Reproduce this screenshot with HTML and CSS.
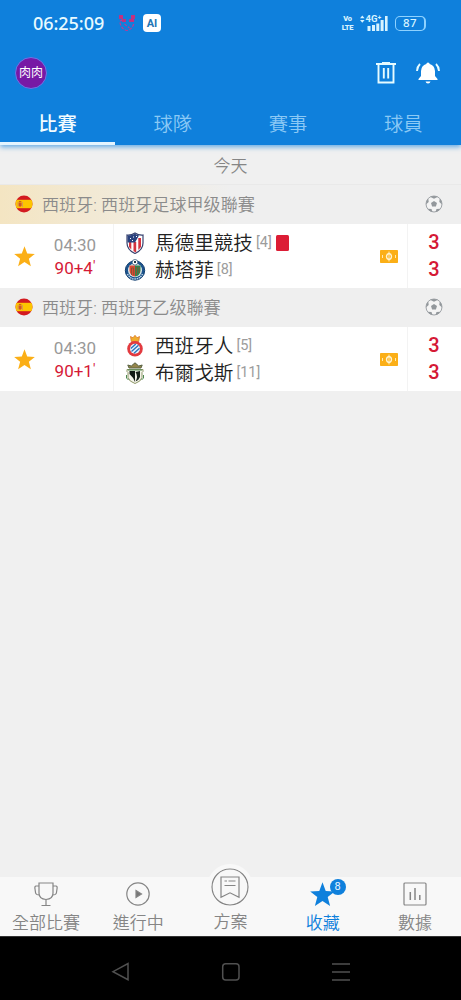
FILE: index.html
```html
<!DOCTYPE html>
<html lang="zh-Hant">
<head>
<meta charset="utf-8">
<meta name="viewport" content="width=device-width, initial-scale=1">
<title>收藏</title>
<link rel="stylesheet" href="styles.css">
</head>
<body>
<svg class="defs" width="0" height="0" aria-hidden="true">
  <symbol id="flag" viewBox="0 0 18 18">
    <clipPath id="round"><circle cx="9" cy="9" r="8.5"/></clipPath>
    <g clip-path="url(#round)"><rect width="18" height="18" fill="#d31a20"/><rect y="4.800" width="18" height="8.400" fill="#fdc400"/><path d="M2.500 7h1v5h-1zM7 7h1v5H7z" fill="#d99a50"/><path d="M3.700 7.500h2.900v3.200q-1.500 2-2.900 0z" fill="#d0522c"/><path d="M3.900 6.500h2.500" stroke="#c8601c"/></g>
  </symbol>
  <symbol id="ball" viewBox="0 0 18 18">
    <circle cx="9" cy="9" r="8" fill="#f4f4f4" stroke="#a0a4a8" stroke-width="1"/>
    <path d="M9 5.900l3 2.200-1.100 3.500H7.100L6 8.100zM5 1.700l4 2 4-2Q9 .2 5 1.700zM1 9.500l2.700-2.600-.4-3.300Q.8 6 1 9.500zM17 9.500l-2.700-2.600.4-3.300Q17.200 6 17 9.500zM2.500 13.700l4 .4 1 2.900Q4.500 16.500 2.500 13.700zM15.500 13.700l-4 .4-1 2.900q3-.5 5-3.300z" fill="#93989c"/>
  </symbol>
  <symbol id="star" viewBox="0 0 24 24"><path d="M12 .3l3.100 8.300 8.700.4-6.800 5.500 2.300 8.500L12 18.200l-7.300 4.800L7 14.500.2 9l8.700-.4z" fill="currentColor"/></symbol>
  <symbol id="pitch" viewBox="0 0 18 13">
    <rect width="18" height="13" rx=".8" fill="#fbaf17"/><path d="M9 1.500v10M2.500 5v3M15.500 5v3" stroke="#ffe9b0" stroke-width="1"/><path d="M9 3.500q2.500.5 2.500 3T9 9.500Q6.500 9 6.500 6.500T9 3.500z" fill="none" stroke="#fff3d0" stroke-width="1.300"/>
  </symbol>
</svg>

<div class="phone">
  <header class="top">
    <div class="status">
      <span class="clock">06:25:09</span>
      <svg class="pig" width="18" height="18" viewBox="0 0 18 18"><g fill="none" stroke="#ba3c95" stroke-width="1.200"><path d="M2 2l4 1.500M16 2l-4 1.500M2 7l4-2M16 7l-4-2M2 8.500Q3 15 9 16.500 15 15 16 8.500M6.500 10l5 4" stroke-dasharray="3 1.500"/></g><path d="M1 1h4v4H1zM13 1h4v4h-4zM4 5h4v3H4zM11 5h5v3h-5z" fill="#d82873" opacity=".85"/></svg>
      <span class="ai">AI</span>
      <span class="volte"><b>Vo</b><b>LTE</b></span>
      <svg class="signal" width="30" height="18" viewBox="0 0 30 18"><path d="M1 4.200L3.300 1.500l2.300 2.700zM1 6l2.300 2.700L5.600 6z" fill="#d7f3ff"/><text x="6.500" y="8.300" class="net">4G⁺</text><path d="M8.500 12h3v5h-3zM13 11h3v6h-3zM17.300 9.500h3V17h-3zM21.600 6h3v11h-3zM26 2h2.600v15H26z" fill="#d7f3ff"/></svg>
      <span class="battery">87</span>
    </div>
    <div class="appbar">
      <span class="avatar">肉肉</span>
      <svg class="trash" width="22" height="24" viewBox="0 0 22 24" fill="none" stroke="#e6fbff" stroke-width="1.900"><path d="M1 3h20M7 2h8M3.500 3v18.500h15V3M8.800 7v10.500M13.200 7v10.500"/></svg>
      <svg class="bell" width="24" height="24" viewBox="0 0 24 24"><path d="M12 1.400q1.500 0 1.700 1.500 5 1.200 5.300 7.100v5l2.500 3v1h-19v-1L5 15v-5q.3-5.900 5.300-7.100.2-1.500 1.700-1.500z" fill="#fff"/><path d="M9.500 20.500h5q-.5 2-2.500 2t-2.500-2z" fill="#fff"/><path d="M4 3Q1.300 5.500 1 10M20 3q2.700 2.500 3 7" fill="none" stroke="#e6fbff" stroke-width="1.900"/></svg>
    </div>
    <nav class="tabs"><a class="on">比賽</a><a>球隊</a><a>賽事</a><a>球員</a></nav>
  </header>

  <main class="list">
    <div class="day">今天</div>

    <div class="league featured"><svg class="flag"><use href="#flag"/></svg><span>西班牙: 西班牙足球甲级聯賽</span><svg class="ball"><use href="#ball"/></svg></div>
    <section class="match">
      <svg class="fav"><use href="#star"/></svg>
      <div class="time"><span>04:30</span><span class="live">90+4<i>'</i></span></div>
      <div class="teams">
        <div class="team">
          <svg class="crest" viewBox="0 0 22 22"><path d="M3 3q4 .5 8-2 4 2.500 8 2v8q0 7-8 10.500Q3 18 3 11z" fill="#fff" stroke="#37426f" stroke-width="1.200"/><path d="M5 10h2.300v7.500L5 15zM9.500 10h2.700v10.500l-2.700-1.200zM14.300 6H17v9l-2.700 3z" fill="#d5333f"/><path d="M3.500 3.500q4 .3 7.500-1.700 2 1.300 4 1.600L11 10.500H3.500z" fill="#29417d"/><path d="M6 6.500h1M9 5h1M8 8.500h1M12 4.500h1" stroke="#fff"/></svg>
          <span class="name">馬德里競技</span><span class="rank">[4]</span><span class="red-card"></span>
        </div>
        <div class="team">
          <svg class="crest" viewBox="0 0 22 22"><circle cx="11" cy="11.500" r="9.700" fill="#1c548e" stroke="#123f70"/><circle cx="11" cy="11.300" r="7" fill="#d9e3e4"/><path d="M5.500 6.500H11v11q-5-.5-5.500-6z" fill="#df4932"/><path d="M11 6.500h5.500v5q-.5 5.500-5.500 6z" fill="#30854d"/><path d="M7.500 16V9h2.200v7M12.500 16V8M15 14V8" stroke="#8b5132" fill="none"/><path d="M3.500 15Q6 20 11 20t7.500-5" fill="none" stroke="#c9dce9" stroke-dasharray="1.500 .7" stroke-width="1.300"/><circle cx="11" cy="3.300" r="2.800" fill="#fff" stroke="#234b6b" stroke-width=".7"/><path d="M10 2h2v2h-2z" fill="#263b49"/></svg>
          <span class="name">赫塔菲</span><span class="rank">[8]</span>
        </div>
      </div>
      <svg class="pitch"><use href="#pitch"/></svg>
      <div class="score"><b>3</b><b>3</b></div>
    </section>

    <div class="league"><svg class="flag"><use href="#flag"/></svg><span>西班牙: 西班牙乙级聯賽</span><svg class="ball"><use href="#ball"/></svg></div>
    <section class="match">
      <svg class="fav"><use href="#star"/></svg>
      <div class="time"><span>04:30</span><span class="live">90+1<i>'</i></span></div>
      <div class="teams">
        <div class="team">
          <svg class="crest" viewBox="0 0 22 22"><path d="M6.500 1.500l2.500 1.300 2-2.500 2 2.500 2.500-1.300-.8 5H7.300z" fill="#efad2b" stroke="#dc7a28" stroke-width=".8"/><circle cx="11" cy="13.700" r="7.800" fill="#e23a3f"/><circle cx="11" cy="13.700" r="5" fill="#e9f2fc"/><path d="M6.800 13.500l5-4.500M7.500 16.500l7-6.300M10 18.300l5.500-5" stroke="#2874bd" stroke-width="1.300"/></svg>
          <span class="name">西班牙人</span><span class="rank">[5]</span>
        </div>
        <div class="team">
          <svg class="crest" viewBox="0 0 22 22"><path d="M5 6l-1.200-3 3.500 1L11 .8 14.700 4l3.500-1L17 6z" fill="#95854b" stroke="#596343"/><path d="M3 7.500h16v2l-1 1v5q-1 4-7 6-6-2-7-6v-5l-1-1z" fill="#f4f4e9" stroke="#8d9668"/><path d="M5.500 9H11v11q-1-4-5.500-8z" fill="#111914"/><path d="M11.500 10l4.500-1v6q-1 3-4.500 4.500 3-5 0-9.500z" fill="#18221a"/><path d="M2.500 13v3l2 2M19.500 13v3l-2 2M4 8h14" stroke="#4d8850" fill="none"/></svg>
          <span class="name">布爾戈斯</span><span class="rank">[11]</span>
        </div>
      </div>
      <svg class="pitch"><use href="#pitch"/></svg>
      <div class="score"><b>3</b><b>3</b></div>
    </section>
  </main>

  <nav class="bottom">
    <a><svg class="icon" viewBox="0 0 24 24"><path d="M5 1h14v10q0 6-7 6.500Q5 17 5 11zM5 4H2q-1.500 0-1 3l.6 4q.4 2 3.800 2M19 4h3q1.500 0 1 3l-.6 4q-.4 2-3.800 2M12 17.500V23.500M7.500 23.500h9"/></svg><span>全部比賽</span></a>
    <a><svg class="icon" viewBox="0 0 24 24"><circle cx="12" cy="12" r="11.200"/><path d="M10 8.500l5.500 3.500-5.500 3.500z" fill="#777"/></svg><span>進行中</span></a>
    <a class="plan"><svg class="plan-icon" viewBox="0 0 38 38"><circle cx="19" cy="19" r="18"/><path d="M10 9h18v20.300l-9-4.500-9 4.500zM13.500 13H16M17.500 13h7M13.500 17.500h11"/></svg><span>方案</span></a>
    <a class="current"><svg class="fav-icon"><use href="#star"/></svg><em class="badge">8</em><span>收藏</span></a>
    <a><svg class="icon" viewBox="0 0 24 24"><rect x="1" y="1" width="22" height="22" rx="1"/><path d="M7.300 10v8M12 6v12M16.800 13v5" stroke-width="1.500"/></svg><span>數據</span></a>
  </nav>

  <footer class="system">
    <svg viewBox="0 0 20 20"><path d="M17 1.500v16.200L2 9.700z"/></svg>
    <svg viewBox="0 0 20 20"><rect x="1.700" y="1.700" width="16.300" height="16.300" rx="3"/></svg>
    <svg viewBox="0 0 20 20"><path d="M1 2h18M1 10h18M1 18h18"/></svg>
  </footer>
</div>
</body>
</html>
```
FILE: styles.css
```css
* { box-sizing: border-box; }
body { margin: 0; background: #f0f0f0; font-family: Roboto, "Noto Sans CJK TC", sans-serif; font-weight: 350; }
svg { display: block; flex: none; }
.defs { position: absolute; }
.phone { width: 461px; height: 1000px; display: flex; flex-direction: column; overflow: hidden; }

.top { height: 145px; flex: none; background: #0f80dc; color: #fff; box-shadow: 0 2px 5px #1080dca0; z-index: 1; }
.status { height: 46px; display: flex; align-items: center; padding: 0 34px 0 33px; }
.clock { width: 85px; font: 500 18px/20px "Noto Sans", sans-serif; letter-spacing: -.05px; white-space: nowrap; color: #e8faff; }
.pig { margin-right: 7px; }
.ai { width: 18px; height: 18px; border-radius: 4px; background: #fff; color: #2276b5; font: 700 11px/19px Roboto, sans-serif; text-align: center; }
.volte { margin-left: auto; margin-right: 5px; width: 13px; display: grid; grid-auto-rows: 9px; font: 700 7.500px/9px Roboto, sans-serif; text-align: center; color: #d7f3ff; }
.volte b { letter-spacing: -.3px; }
.signal { margin-right: 6px; }
.net { font: 700 9.500px Roboto, sans-serif; fill: #d7f3ff; }
.battery { width: 31px; height: 15px; border: 1.500px solid #8ed2ff; border-radius: 5px; font: 500 11.500px/12px "Noto Sans", sans-serif; text-align: center; letter-spacing: .3px; color: #d7f3ff; border-right-width: 2px; margin-right: 1px; }
.appbar { height: 56px; display: flex; align-items: center; padding: 0 21px 2px 15px; }
.avatar { width: 32px; height: 32px; border-radius: 50%; border: 1.500px solid #6b76e8; background: #7719a5; font-size: 12px; font-weight: 400; line-height: 31px; text-align: center; }
.trash { margin-left: auto; margin-right: 19px; }
.tabs { height: 43px; display: grid; grid-template: 43px / repeat(4, 1fr); text-align: center; font-size: 19.300px; line-height: 45px; color: #8bc9f5; }
.tabs .on { color: #f2fcff; font-weight: 500; border-bottom: 3px solid #e3f4ff; }

.list { flex: 1; }
.day { height: 39px; line-height: 43px; text-align: center; font-size: 17px; color: #858585; }
.league { height: 39px; display: flex; align-items: center; padding: 0 18px 1px 15px; font-size: 17.100px; color: #8b8b8b; background: #efefef; }
.league span { padding-bottom: 1px; }
.league.featured { height: 40px; background: linear-gradient(90deg, #f4e5c2, #efefef 50%); border-top: 1px solid #e9e9e9; }
.flag { width: 18px; height: 18px; margin-right: 9px; }
.ball { width: 18px; height: 18px; margin-left: auto; }
.match { height: 64px; display: grid; grid-template-columns: 37px 76px 258px 36px 54px; align-items: center; background: #fff; }
.fav { width: 21px; height: 21px; margin-left: 14px; color: #fbaf17; }
.time { display: grid; padding-top: 2px; line-height: 23px; font-size: 17px; font-weight: 400; text-align: center; color: #999; }
.live { color: #d51936; }
.live i { font-style: normal; font-size: 14px; vertical-align: 3px; line-height: 10px; }
.teams { height: 64px; border-left: 1px solid #f3f3f3; padding: 5px 0 5px 10px; }
.team { height: 27px; display: flex; align-items: center; }
.crest { width: 22px; height: 22px; margin-right: 9px; }
.name { font-size: 19.600px; line-height: 27px; color: #222; padding-top: 1px; }
.rank { font-size: 14.500px; font-weight: 400; margin-left: 3px; color: #9c9c9c; }
.red-card { width: 13px; height: 16px; border-radius: 1.500px; background: #dc1d35; margin-left: 4px; }
.pitch { width: 18px; height: 13px; margin-left: 9px; }
.score { height: 64px; border-left: 1px solid #f3f3f3; padding-top: 5px; display: grid; grid-auto-rows: 27px; line-height: 27px; font-size: 20px; text-align: center; color: #d51936; }
.score b { font-weight: 500; padding-right: 1px; }

.bottom { height: 59px; flex: none; display: grid; grid-template-columns: repeat(5, 1fr); background: #f8f8f8; color: #858585; font-size: 17px; }
.bottom a { position: relative; display: flex; flex-direction: column; align-items: center; padding-top: 5px; }
.bottom span { line-height: 24px; margin-top: 5px; white-space: nowrap; }
.icon { width: 24px; height: 24px; }
.icon, .plan-icon { fill: none; stroke: #858585; stroke-width: 1.200; }
.bottom .plan { padding: 0; }
.plan-icon { width: 46px; height: 46px; padding: 4px; margin: -13px 0 -5px; border-radius: 50%; background: #f8f8f8; }
.bottom .current { color: #0f80dc; }
.fav-icon { width: 25px; height: 25px; margin-bottom: -1px; }
.badge { position: absolute; left: 53px; top: 2px; width: 16px; height: 16px; border-radius: 50%; background: #0f80dc; color: #e8f6ff; font: 400 11px/16px Roboto, sans-serif; text-align: center; }
.system { height: 64px; flex: none; display: flex; justify-content: center; gap: 90px; align-items: center; padding-top: 7px; background: #000; border-top: 1px solid #333; }
.system svg { width: 20px; height: 20px; fill: none; stroke: #505050; stroke-width: 1.500; }
```
